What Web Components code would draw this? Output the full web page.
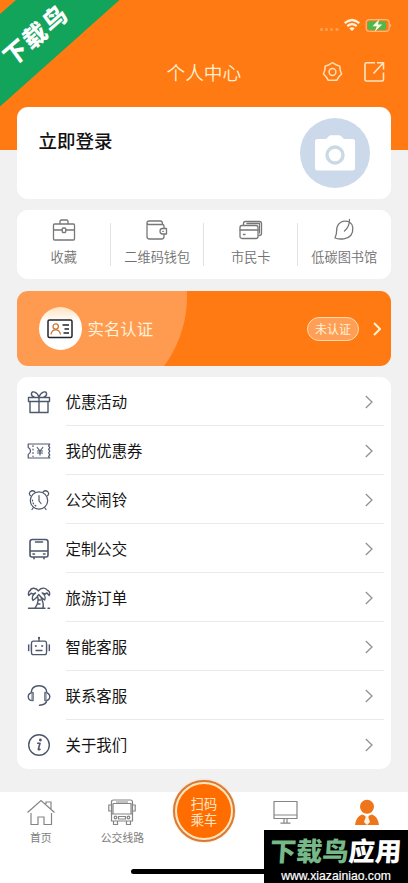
<!DOCTYPE html>
<html lang="zh-CN">
<head>
<meta charset="utf-8">
<title>个人中心</title>
<style>
html,body{margin:0;padding:0}
body{width:408px;height:883px;overflow:hidden;font-family:"Noto Sans CJK SC",sans-serif}
</style>
</head>
<body>
<profile-page></profile-page>
<script>
const define = (name, html) => {
  const t = document.createElement('template');
  t.innerHTML = html;
  customElements.define(name, class extends HTMLElement {
    constructor() {
      super();
      this.attachShadow({mode: 'open'}).appendChild(t.content.cloneNode(true));
    }
  });
};

define('status-bar', `
<style>
:host{display:flex;height:50px;justify-content:flex-end;box-sizing:border-box;padding:17px 17px 0 0}
svg{display:block}
</style>
<svg width="76" height="18" viewBox="315 17 76 18">
  <g fill="#ff9c4c"><rect x="320" y="28" width="3" height="3" rx="1"/><rect x="325" y="28" width="3" height="3" rx="1"/><rect x="330" y="28" width="3" height="3" rx="1"/><rect x="335.500" y="28" width="3" height="3" rx="1"/></g>
  <g fill="none" stroke="#fff3dc" stroke-width="2.300"><path d="M344.700 23.200Q352 16.800 359.300 23.200"/><path d="M347.300 26.100Q352 22.100 356.700 26.100"/></g>
  <path d="M349.300 28.200Q352 26.200 354.700 28.200L352 31z" fill="#fff3dc"/>
  <rect x="366.200" y="19.700" width="23" height="11.600" rx="3.300" fill="none" stroke="#ffb780" stroke-width="1.200"/>
  <path d="M390.800 24V27" stroke="#ffb780" stroke-width="1.200"/>
  <rect x="367.600" y="21.300" width="18.500" height="8.400" rx="1.800" fill="#4fb84b"/>
  <path d="M379 19.500L372.500 26.200H376.800L374.800 31.500L382.300 24.400H378z" fill="#fffbe9"/>
</svg>`);

define('title-bar', `
<style>
:host{display:grid;grid-template-columns:322px 42px 44px;height:44px;align-items:center;color:#fff0d4}
h1{margin:0;font-size:18.700px;font-weight:350;line-height:28px;padding-left:166.500px;margin-top:-1px}
svg{display:block}
</style>
<h1>个人中心</h1>
<svg width="22" height="22" viewBox="0 0 22 22" fill="none" stroke="#ffe0b8" stroke-width="1.500" stroke-linejoin="round"><path d="M10.500 1.700L13.800 3.700L17.800 5.100L18.200 9.300L19.600 13L16.700 16L14.700 19.300H6.300L4.300 16L1.400 13L2.800 9.300L3.200 5.100L7.200 3.700z"/><circle cx="10.500" cy="11" r="3.400"/></svg>
<svg width="22" height="22" viewBox="0 0 22 22" fill="none" stroke="#ffe5c4" stroke-width="1.600"><path d="M11 1.800H2.500Q1 1.800 1 3.300V18.500Q1 20 2.500 20H18Q19.500 20 19.500 18.500V11.500M9.500 12.500L19.200 2M13 1.800H19.500V8.500"/></svg>`);

define('corner-ribbon', `
<style>
:host{position:absolute;left:0;top:0;width:120px;height:107px;display:block}
:host::before{content:"";position:absolute;inset:0;clip-path:polygon(16px 0,119.500px 0,0 106.500px,0 14px);background:#12a45b}
span{position:absolute;left:-6px;top:17px;width:82px;text-align:center;font-size:24px;letter-spacing:2px;line-height:34px;font-weight:900;color:#fff;transform:rotate(-41deg) skewX(-5deg)}
</style><span><slot></slot></span>`);

define('login-card', `
<style>
:host{display:flex;justify-content:space-between;align-items:flex-start;box-sizing:border-box;height:92px;border-radius:11px;background:#fff;padding:11px 21.500px 0}
h2{margin:8px 0 0;font-size:18.500px;line-height:28px;font-weight:500;color:#111}
svg{display:block}
</style>
<h2><slot></slot></h2>
<svg width="70" height="70" viewBox="0 0 70 70"><circle cx="35" cy="35" r="35" fill="#ccd9eb"/><path d="M17.500 21H25Q27 21 28 19Q29 17.300 31 17.300H39Q41 17.300 42 19Q43 21 45 21H52.500Q55 21 55 23.500V50Q55 52.500 52.500 52.500H17.500Q15 52.500 15 50V23.500Q15 21 17.500 21z" fill="#fff"/><circle cx="35" cy="37" r="8" fill="none" stroke="#c9d9e5" stroke-width="3.400"/></svg>`);

define('quick-item', `
<style>
:host{display:flex;flex-direction:column;align-items:center;padding-top:8px;color:#707070;font-size:13.200px;line-height:20px;font-weight:350;white-space:nowrap;position:relative}
::slotted(svg){display:block;margin-bottom:5px}
:host([divided])::after{content:"";position:absolute;right:0;top:13px;width:1px;height:43px;background:#e2e2e2}
</style><slot name="icon"></slot><span><slot></slot></span>`);

define('quick-card', `
<style>
:host{display:grid;grid-template-columns:repeat(4,1fr);height:69px;border-radius:11px;background:#fff}
svg{fill:none;stroke:#777;stroke-width:1.300;stroke-linejoin:round;stroke-linecap:round}
</style>
<quick-item divided><svg slot="icon" width="24" height="24" viewBox="0 0 24 24"><rect x="1.500" y="6" width="21" height="16" rx="1"/><path d="M8 5.500V3.500Q8 2 9.500 2H14.500Q16 2 16 3.500V5.500M1.500 12H10M14 12H22.500"/><rect x="10.200" y="10" width="3.600" height="4.500" rx="1"/></svg>收藏</quick-item>
<quick-item divided><svg slot="icon" width="24" height="24" viewBox="0 0 24 24"><path d="M19 10V8Q19 6.500 17.500 6.500H4Q2 6.500 2 4.700Q2 3 4 3H15.500Q17.500 3 17.500 6M2 5V18.500Q2 21 4.500 21H16.500Q19 21 19 18.500V16.500M21.500 10.500H17.500Q15 10.500 15 13.300Q15 16 17.500 16H21.500zM17.700 13.300H18.300"/></svg>二维码钱包</quick-item>
<quick-item divided><svg slot="icon" width="24" height="24" viewBox="0 0 24 24"><rect x="1" y="7.500" width="18" height="13" rx="2"/><path d="M1 12H19M4.500 16.500H6M4.500 7V5.500Q4.500 3.500 6.500 3.500H20.500Q22.500 3.500 22.500 5.500V15.500Q22.500 17.500 20 17.500M8 5.500H20.500V15"/></svg>市民卡</quick-item>
<quick-item><svg slot="icon" width="24" height="24" viewBox="0 0 24 24"><path d="M3 20Q6 21.500 12 20.800Q21.500 19 20.800 9.500Q20.500 6 18 4.500Q13 1.800 8.500 4.500Q4.800 7 4.700 12Q4.700 16.500 3 20M17.500 1.500Q17.500 9 12.500 13"/></svg>低碳图书馆</quick-item>`);

define('verify-card', `
<style>
:host{display:flex;align-items:center;box-sizing:border-box;height:75px;border-radius:11px;padding:0 10px 0 21.500px;background:radial-gradient(circle at 52px 5px,#ff9b50 117.500px,#ff7a12 118.500px);color:#fff2d8}
.id{width:43px;height:43px;border-radius:50%;background:linear-gradient(#ffe2bd,#fff 34%);display:grid;place-items:center}
svg{display:block}
b{font-size:16.400px;font-weight:400;line-height:24px;margin-left:6px;flex:1;margin-top:-1px}
.pill{box-sizing:border-box;width:52px;height:24px;border:1px solid #ffdaa9;border-radius:12px;background:#ff9f57;text-align:center;font-size:12px;line-height:21px;font-weight:400;margin-right:14px}
</style>
<div class="id"><svg width="26" height="20" viewBox="0 0 26 20" fill="none"><rect x="1" y="1" width="24" height="17.500" rx="1.500" stroke="#20242c" stroke-width="1.500"/><circle cx="8.700" cy="7.500" r="2.700" stroke="#cf7835" stroke-width="1.300"/><path d="M4 15.500Q4.700 10.800 8.700 10.800Q12.700 10.800 13.500 15.500" stroke="#cf7835" stroke-width="1.300"/><path d="M15.500 6H22M17.500 10H22M16.500 14H22" stroke="#20242c" stroke-width="1.400"/></svg></div>
<b>实名认证</b><span class="pill">未认证</span>
<svg width="8" height="14" viewBox="0 0 8 14" fill="none" stroke="#fff0d0" stroke-width="2"><path d="M1 1L7 7L1 13"/></svg>`);

define('menu-row', `
<style>
:host{display:grid;grid-template-columns:48.500px 1fr;height:49px}
.icon{display:flex;align-items:center;padding-left:9.500px}
.body{display:flex;align-items:center;justify-content:space-between;border-bottom:1px solid #e9e9e9;margin-right:7px;padding-right:11px;color:#151515;font-size:15.400px;line-height:24px}
.body svg{margin-top:2px}
:host([last]) .body{border-color:transparent}
</style>
<div class="icon"><slot name="icon"></slot></div>
<div class="body"><span><slot></slot></span><svg width="8" height="14" viewBox="0 0 8 14" fill="none" stroke="#929292" stroke-width="1.300"><path d="M.8 1L7 7L.8 13"/></svg></div>`);

define('menu-card', `
<style>
:host{display:block;height:392px;border-radius:11px;background:#fff}
svg{display:block;fill:none;stroke:#4e586c;stroke-width:1.400;stroke-linecap:round;stroke-linejoin:round}
</style>
<menu-row><svg slot="icon" width="24" height="24" viewBox="0 0 24 24"><path d="M1.500 7.500H22.500V11.500H1.500zM3 11.500V22.500H21V11.500M12 7.500V22.500M12 7C10 1.500 5 .5 4.500 3.500C4.200 5 5.500 6.500 7 7M12 7C14 1.500 19 .5 19.500 3.500C19.800 5 18.500 6.500 17 7"/></svg>优惠活动</menu-row>
<menu-row><svg slot="icon" width="24" height="24" viewBox="0 0 24 24" style="stroke-width:1.200"><path d="M1.200 5H22.800L21.600 6.800L22.800 8.600L21.600 10.400L22.800 12.200L21.600 14L22.800 15.800L21.600 17.400L22.800 19H1.200V15.500Q3.500 14.500 3.500 12Q3.500 9.500 1.200 8.500zM6 6.500V7.500M6 10V11M6 13.500V14.500M6 17V17.500"/><path d="M10.200 8.500L13 12L15.800 8.500M13 12V16M10.500 12H15.500M10.500 14H15.500"/></svg>我的优惠券</menu-row>
<menu-row><svg slot="icon" width="24" height="24" viewBox="0 0 24 24" style="stroke-width:1.200"><circle cx="12" cy="12.500" r="8.700"/><path d="M3.500 7.700Q1.500 6 3 4Q5.500 1.500 8 4M20.500 7.700Q22.500 6 21 4Q18.500 1.500 16 4M12 7.500V13L14 15.500M6.500 19.500L5 21.500M17.500 19.500L19 21.500"/><path d="M5.500 12A6.500 6.500 0 0 0 9 18" stroke-dasharray="1 2"/></svg>公交闹铃</menu-row>
<menu-row><svg slot="icon" width="24" height="24" viewBox="0 0 24 24" style="stroke-width:1.600"><path d="M3 14V5Q3 2.500 5.500 2.500H18.500Q21 2.500 21 5V18Q21 20 19 20H5Q3 20 3 18V14H21M8.500 5H15.500M6 17H7.500M16.500 17H18M7 20V21.700M17 20V21.700"/></svg>定制公交</menu-row>
<menu-row><svg slot="icon" width="24" height="24" viewBox="0 0 24 24"><path d="M11.500 5C9 1.300 4 1.500 3.300 4.500C1.300 5.500 1 8 1.800 9.500L4.200 7.200L6 8.200L8.500 7C5.500 8.500 4.500 12 6 14.500C7.500 13.500 10.500 11 11.700 8.500C13 10 15.800 13 17.700 14C19 11.500 17.300 8.500 15.200 7L18 8L20 7L22.200 9.500C23.500 7 22 4.500 20.300 4.200C19 1.500 14 1 11.500 5zM10.500 10Q12.500 16 8 22M14 11.500Q17 17 16 22M11.800 14H13.500M11.300 18H13M1.500 22.300H18M21 22.300H22.500"/></svg>旅游订单</menu-row>
<menu-row><svg slot="icon" width="24" height="24" viewBox="0 0 24 24" style="stroke-width:1.300"><rect x="4.500" y="6.200" width="15" height="13.500" rx="2"/><path d="M12 6V3.300M1.600 10V15.500M22.400 10V15.500M9 15.500H15"/><path d="M3 9.500V16M21 9.500V16" stroke="#a3a8b2" stroke-width="1"/><circle cx="12" cy="3" r=".5"/><circle cx="8.800" cy="11" r=".4"/><circle cx="15.200" cy="11" r=".4"/></svg>智能客服</menu-row>
<menu-row><svg slot="icon" width="24" height="24" viewBox="0 0 24 24"><path d="M4 9Q4.500 1.700 12 1.700Q19.500 1.700 20 9M6 8.500V16.500Q1.500 17 1.200 12.500Q1.500 9 6 8.500M18 8.500V16.500Q22.500 17 22.800 12.500Q22.500 9 18 8.500M20 16Q19 21 12.500 21.300"/><path d="M5 9V16M19 9V16" stroke="#9299a6"/></svg>联系客服</menu-row>
<menu-row last><svg slot="icon" width="24" height="24" viewBox="0 0 24 24"><circle cx="12" cy="12" r="10.300"/><path d="M10.700 10.200H13L11.300 16.300Q11.500 17.200 13 16.300" stroke-width="1.600"/><circle cx="13.400" cy="7" r=".7" fill="#4e586c"/></svg>关于我们</menu-row>`);

define('tab-item', `
<style>
:host{display:flex;flex-direction:column;align-items:center;padding-top:5px;color:#7d7d7d;font-size:10.800px;line-height:16px;white-space:nowrap}
::slotted(svg){display:block;margin-bottom:2px}
</style><slot name="icon"></slot><span><slot></slot></span>`);

define('scan-button', `
<style>
:host{display:block;margin:-12px auto 0;width:54px;height:54px;border:2px solid #d77a37;border-radius:50%;padding:2px;background:#ffe6bd;box-shadow:0 0 2px #ffc68b}
div{height:100%;border-radius:50%;background:#ff6d00;display:flex;flex-direction:column;justify-content:center;text-align:center;color:#ffe6c7;font-size:13.200px;line-height:15.500px;box-sizing:border-box;padding-top:1px}
</style><div><slot></slot></div>`);

define('tab-bar', `
<style>
:host{display:grid;grid-template-columns:repeat(5,81.600px);height:91px;background:#fff;align-content:start;position:relative}
svg{fill:none;stroke:#858585;stroke-width:1.200}
.home{position:absolute;left:131px;bottom:9px;width:146px;height:5px;border-radius:3px;background:#000}
</style>
<tab-item><svg slot="icon" width="30" height="30" viewBox="0 0 30 30"><path d="M1.500 15.500L15 3.500L28.500 15.500M5 16V27.500H12V20H18V27.500H25.500V16M20 7V5H25V12.500"/></svg>首页</tab-item>
<tab-item><svg slot="icon" width="30" height="30" viewBox="0 0 30 30"><path d="M4.500 17V5Q4.500 3 6.500 3H23.500Q25.500 3 25.500 5V24H4.500V17H25.500M6 6.500H24V17M6 6.500V17M9 5H21M4 8H1.800V14H4M26 8H28.200V14H26M6.500 24V27.500H10.500V24M19.500 24V27.500H23.500V24"/><path d="M11.500 19.500H18.500V22H11.500z"/><circle cx="8.500" cy="20.500" r="1.300"/><circle cx="21.500" cy="20.500" r="1.300"/></svg>公交线路</tab-item>
<scan-button><span>扫码</span><span>乘车</span></scan-button>
<tab-item><svg slot="icon" width="30" height="30" viewBox="0 0 30 30"><path d="M3 4.500H26V21.500H3zM3 18H26M13 21.500V26M16 21.500V26M9.500 26.200H19.500"/></svg></tab-item>
<tab-item><svg slot="icon" width="30" height="30" viewBox="0 0 30 30" style="stroke:none;fill:#ee7519"><circle cx="15" cy="9.800" r="7"/><path d="M10 17.500Q4 19.500 3 28H27Q26 19.500 20 17.500L15 19.500z"/><path d="M12.800 18L15 19.300L17.200 18L16.300 20.300L18 25L15 28L12 25L13.700 20.300z" fill="#fff5e5"/></svg></tab-item>
<div class="home"></div>`);

define('site-badge', `
<style>
:host{position:absolute;right:0;bottom:0;width:144px;height:53px;background:#000;color:#fff;text-align:center;display:flex;flex-direction:column;align-items:center}
b{font-size:26.300px;line-height:38px;height:38px;margin-top:1px;font-weight:900;white-space:nowrap;transform:skewX(-4deg)}
i{font-style:normal;color:#76b887}
small{font:12.200px/14px "Liberation Sans",Arial,sans-serif;-webkit-text-stroke:.2px #fff}
</style><b><i>下载鸟</i>应用</b><small>www.xiazainiao.com</small>`);

define('profile-page', `
<style>
:host{display:flex;flex-direction:column;position:relative;width:408px;height:883px;overflow:hidden;background:linear-gradient(#ff7a12 150.500px,#f1f1f1 150.500px)}
main{display:flex;flex-direction:column;padding:0 17px;margin-top:13px;flex:1}
quick-card{margin-top:11px}verify-card{margin-top:12px}menu-card{margin-top:11px}
</style>
<status-bar></status-bar><title-bar></title-bar>
<main><login-card>立即登录</login-card><quick-card></quick-card><verify-card></verify-card><menu-card></menu-card></main>
<tab-bar></tab-bar>
<corner-ribbon>下载鸟</corner-ribbon><site-badge></site-badge>`);
</script>
</body>
</html>
